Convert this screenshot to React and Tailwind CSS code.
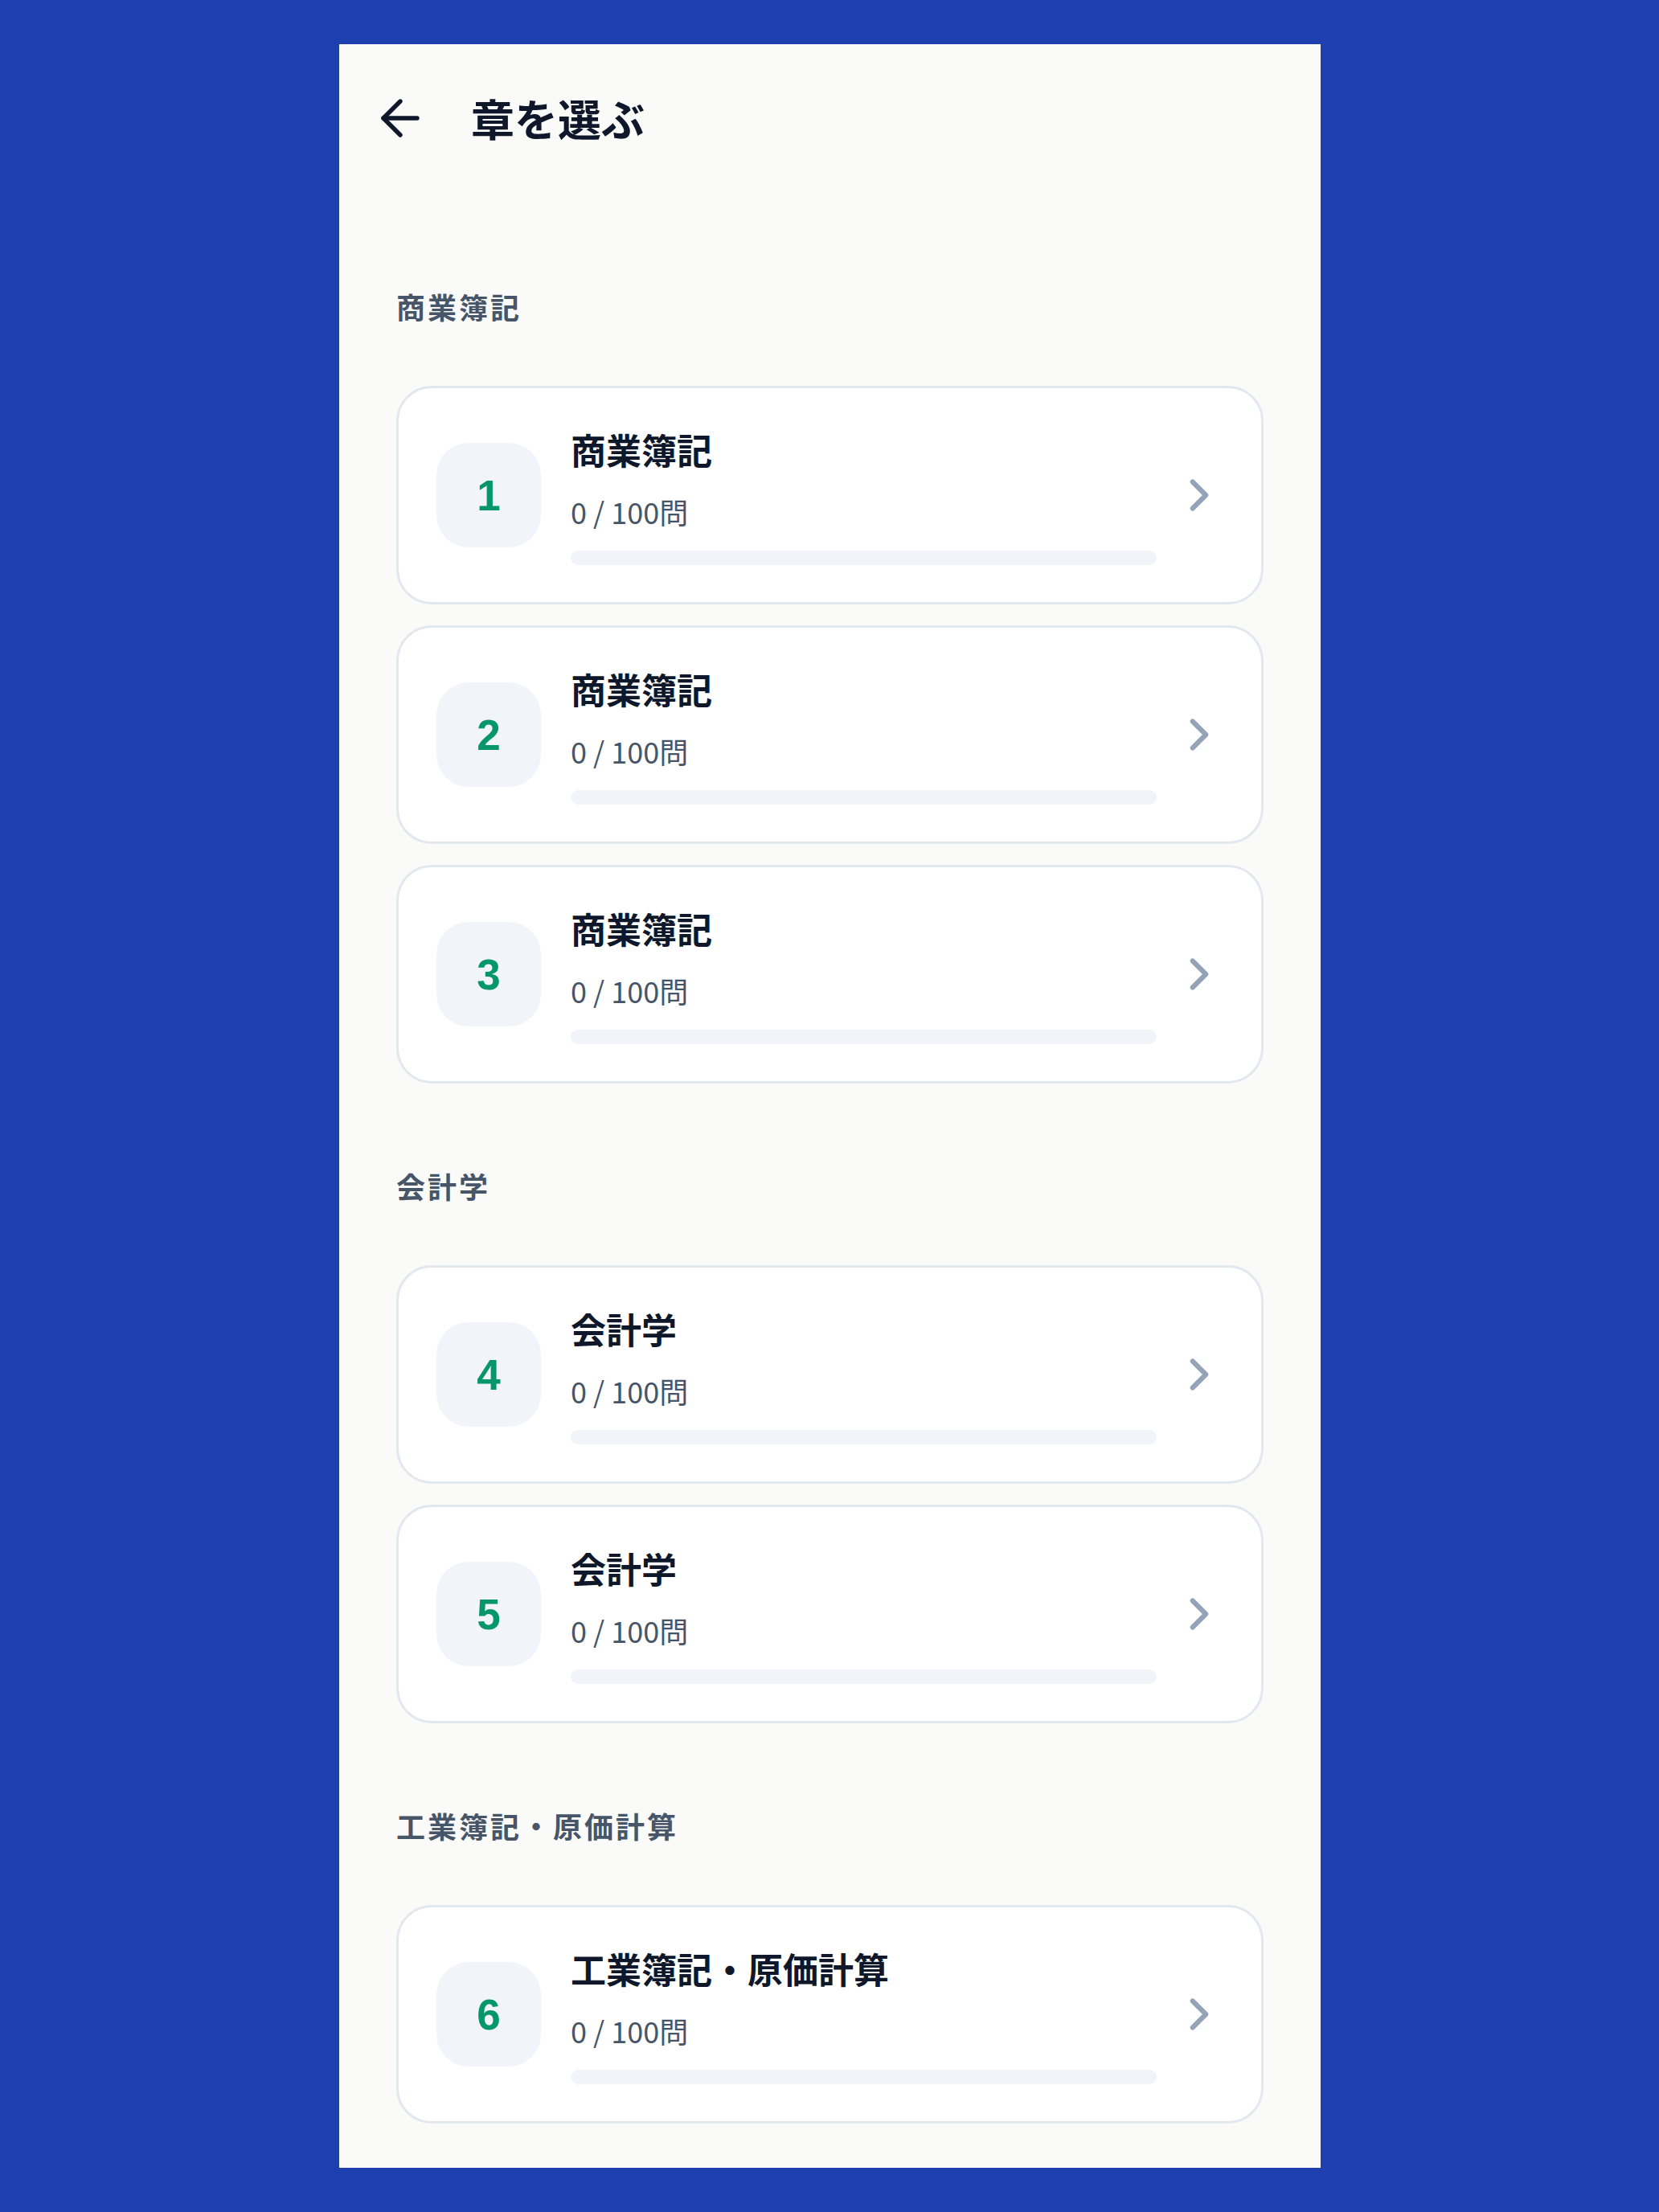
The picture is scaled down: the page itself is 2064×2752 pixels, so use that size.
import React from 'react';
import { ArrowLeft, ChevronRight } from 'lucide-react';

const sections = [
  {
    title: '商業簿記',
    chapters: [
      { no: 1, name: '商業簿記', done: 0, total: 100 },
      { no: 2, name: '商業簿記', done: 0, total: 100 },
      { no: 3, name: '商業簿記', done: 0, total: 100 },
    ],
  },
  {
    title: '会計学',
    chapters: [
      { no: 4, name: '会計学', done: 0, total: 100 },
      { no: 5, name: '会計学', done: 0, total: 100 },
    ],
  },
  {
    title: '工業簿記・原価計算',
    chapters: [{ no: 6, name: '工業簿記・原価計算', done: 0, total: 100 }],
  },
];

const ChapterCard = ({ chapter }) => {
  const pct = chapter.total ? (chapter.done / chapter.total) * 100 : 0;

  return (
    <button className="flex h-[272px] w-full items-center rounded-[44px] border-[3px] border-[#e2e8f0] bg-white pl-[47px] pr-[44px] text-left">
      <div className="flex h-[130px] w-[130px] shrink-0 items-center justify-center rounded-[40px] bg-[#f1f5f9]">
        <span className="font-['Liberation_Sans',Arial,sans-serif] text-[53px] font-bold leading-none text-[#059669]">
          {chapter.no}
        </span>
      </div>

      <div className="ml-[37px] flex w-[729px] flex-col">
        <span className="text-[44px] font-bold leading-[60px] text-[#0f172a]">
          {chapter.name}
        </span>
        <span className="mt-[23px] text-[36px] leading-[48px] text-[#475569]">
          {chapter.done} / {chapter.total}問
        </span>
        <div className="mt-[25px] h-[18px] w-full overflow-hidden rounded-full bg-[#f1f5f9]">
          <div className="h-full rounded-full bg-[#059669]" style={{ width: `${pct}%` }} />
        </div>
      </div>

      <ChevronRight className="ml-[20px] shrink-0 text-[#94a3b8]" size={66} strokeWidth={2.2} />
    </button>
  );
};

export default function App() {
  return (
    <div className="h-[2752px] w-[2064px] bg-[#1e40af] pl-[422px] pt-[55px] font-['Noto_Sans_CJK_JP','Noto_Sans',sans-serif]">
      <div className="h-[2642px] w-[1221px] bg-[#fafaf9] pt-[56px]">
        <header className="flex h-[72px] items-center pl-[40px]">
          <ArrowLeft className="shrink-0 text-[#0f172a]" size={72} strokeWidth={1.8} />
          <h1 className="ml-[52px] text-[54px] font-bold leading-[72px] text-[#0f172a]">章を選ぶ</h1>
        </header>

        <main className="flex flex-col gap-[103px] px-[71px] pt-[174px]">
          {sections.map((section) => (
            <section key={section.title}>
              <h2 className="mb-[75px] text-[36px] font-bold leading-[48px] tracking-[3px] text-[#475569]">
                {section.title}
              </h2>
              <div className="flex flex-col gap-[26px]">
                {section.chapters.map((c) => (
                  <ChapterCard key={c.no} chapter={c} />
                ))}
              </div>
            </section>
          ))}
        </main>
      </div>
    </div>
  );
}
